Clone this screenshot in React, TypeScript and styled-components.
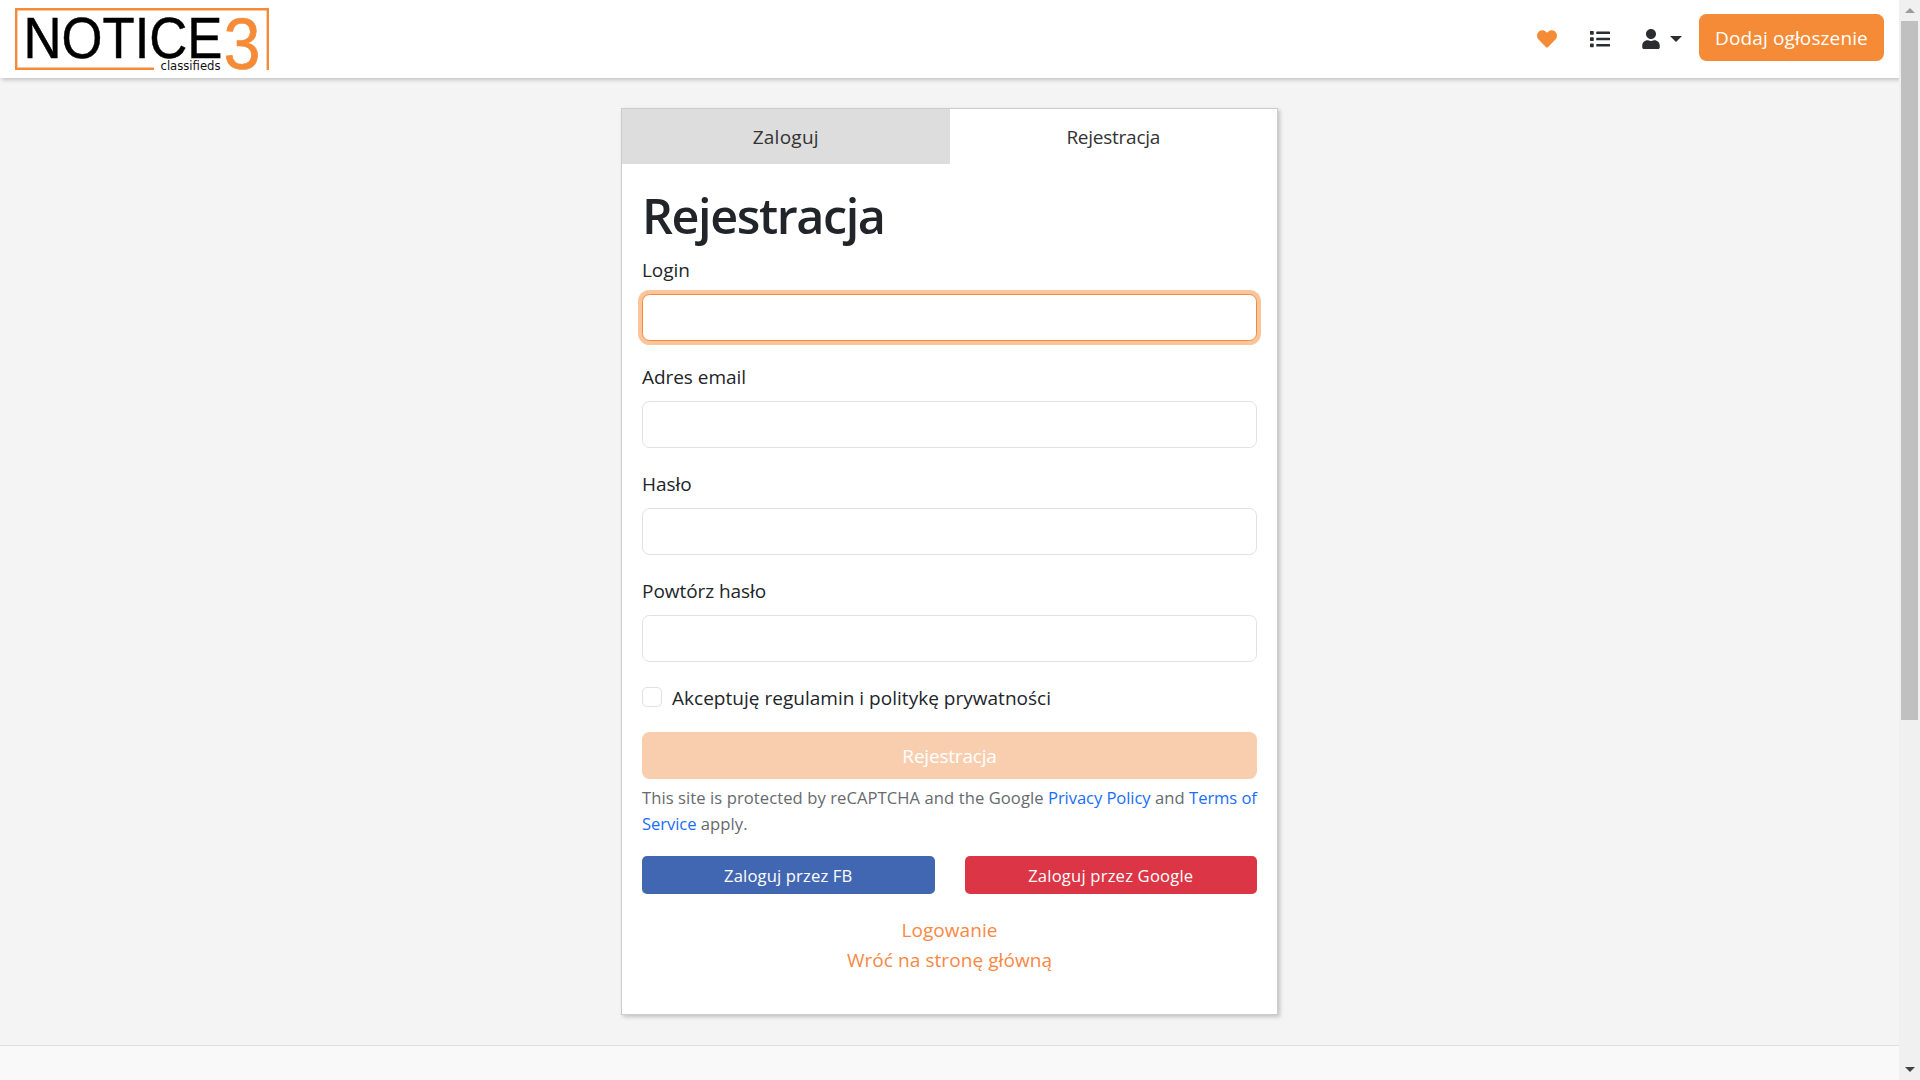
import React from "react";
import styled, { createGlobalStyle } from "styled-components";
import { FaHeart, FaList, FaUser } from "react-icons/fa";

const ORANGE = "#f68b37";

const Global = createGlobalStyle`
  *, *::before, *::after { box-sizing: border-box; }
  html, body { margin: 0; padding: 0; overflow: hidden; }
  body {
    font-family: "Open Sans", "Noto Sans", sans-serif;
    font-size: 19px;
    line-height: 30px;
    color: #212529;
    background: #f4f4f4;
  }
`;

const Shell = styled.div`
  display: grid;
  grid-template-columns: 1fr 21px;
  width: 100vw;
  height: 100vh;
  overflow: hidden;
`;

const Page = styled.div`
  display: flex;
  flex-direction: column;
  min-width: 0;
  overflow: hidden;
`;

const Header = styled.header`
  display: flex;
  align-items: flex-start;
  justify-content: space-between;
  flex: none;
  height: 78px;
  padding: 0 15px;
  background: #fff;
  box-shadow: 2px 2px 4px rgba(0, 0, 0, 0.2);
`;

const Logo = styled.svg`
  display: block;
  margin-top: 8px;
  overflow: visible;
  font-family: "Liberation Sans", Arial, sans-serif;
`;

const Nav = styled.nav`
  display: flex;
  align-items: center;
  margin-top: 14px;
  height: 47px;
`;

const NavItem = styled.a<{ $gap: number; $color?: string }>`
  display: flex;
  align-items: center;
  gap: 11px;
  margin-right: ${(p) => p.$gap}px;
  padding-top: 3px;
  color: ${(p) => p.$color ?? "#2b2d30"};
`;

const Caret = styled.span`
  border: 6px solid transparent;
  border-top-color: #2b2d30;
  border-bottom: 0;
  margin: -1px 0 0 -2px;
`;

const Button = styled.button<{ $bg: string; $small?: boolean; $spacing?: number }>`
  display: flex;
  align-items: center;
  justify-content: center;
  height: ${(p) => (p.$small ? 38 : 47)}px;
  padding: 0 16px;
  border: 0;
  border-radius: ${(p) => (p.$small ? 5 : 7.5)}px;
  background: ${(p) => p.$bg};
  color: #fff;
  font-family: inherit;
  font-size: ${(p) => (p.$small ? 16.6 : 19)}px;
  letter-spacing: ${(p) => p.$spacing ?? 0}px;
  line-height: 30px;
  white-space: nowrap;
`;

const AddButton = styled(Button)`
  width: 185px;
`;

const SocialButton = styled(Button)`
  padding-top: 1px;
`;

const Main = styled.main`
  display: flex;
  justify-content: center;
  align-items: flex-start;
  flex: none;
  height: 967px;
  padding-top: 30px;
`;

const Card = styled.section`
  width: 657px;
  height: 907px;
  border: 1px solid #ccc;
  background: #fff;
  box-shadow: 2px 2px 4px rgba(0, 0, 0, 0.2);
`;

const Tabs = styled.div`
  display: grid;
  grid-template-columns: 1fr 1fr;
`;

const Tab = styled.a<{ $active?: boolean }>`
  height: 55px;
  padding-top: 1px;
  line-height: 55px;
  text-align: center;
  letter-spacing: ${(p) => (p.$active ? -0.25 : 0.25)}px;
  color: #333;
  background: ${(p) => (p.$active ? "#fff" : "#ddd")};
`;

const Form = styled.form`
  display: flex;
  flex-direction: column;
  padding: 20px 20px 0;
`;

const Title = styled.h1`
  height: 60px;
  margin: 0 0 10px;
  padding-top: 1px;
  font-size: 48.5px;
  font-weight: 600;
  letter-spacing: -1.4px;
  line-height: 60px;
`;

const Field = styled.label`
  display: flex;
  flex-direction: column;
  gap: 10px;
  margin-bottom: 20px;
`;

const FieldName = styled.span`
  height: 30px;
  padding-top: 1px;
  letter-spacing: -0.05px;
`;

const Input = styled.input<{ $focused?: boolean }>`
  height: 47px;
  padding: 8px 15px;
  border: 1px solid ${(p) => (p.$focused ? ORANGE : "#dee2e6")};
  border-radius: 7.5px;
  outline: 0;
  background: #fff;
  font: inherit;
  box-shadow: ${(p) => (p.$focused ? "0 0 0 4px #fac59b" : "none")};
`;

const CheckRow = styled.label`
  display: flex;
  align-items: center;
  gap: 10px;
  height: 30px;
  margin-bottom: 20px;
`;

const CheckText = styled.span`
  padding-top: 2px;
  letter-spacing: 0.02px;
`;

const Checkbox = styled.input`
  appearance: none;
  width: 20px;
  height: 20px;
  margin: 0;
  border: 1px solid #dee2e6;
  border-radius: 5px;
`;

const Note = styled.p`
  margin: 6px 0 19px;
  font-size: 16.6px;
  letter-spacing: 0.07px;
  line-height: 26px;
  color: #666a6e;
`;

const NoteLink = styled.a`
  letter-spacing: -0.08px;
  color: #1a6dfd;
`;

const Social = styled.div`
  display: grid;
  grid-template-columns: 1fr 1fr;
  gap: 30px;
  margin-bottom: 21px;
`;

const Links = styled.div`
  display: flex;
  flex-direction: column;
  align-items: center;
`;

const TextLink = styled.a`
  letter-spacing: 0.07px;
  color: #f88843;
`;

const Footer = styled.footer`
  flex: 1;
  border-top: 1px solid #dcdfe1;
  background: #f9f9f9;
`;

const ScrollTrack = styled.div`
  display: flex;
  flex-direction: column;
  align-items: center;
  background: #f0f0f0;
`;

const ScrollArrow = styled.div<{ $down?: boolean }>`
  display: flex;
  align-items: center;
  justify-content: center;
  height: 21px;
  &::before {
    content: "";
    border: 5px solid transparent;
    ${(p) => (p.$down ? "border-top-color: #444; border-bottom: 0;" : "border-bottom-color: #9c9c9c; border-top: 0;")}
  }
`;

const ScrollThumb = styled.div`
  width: 17px;
  height: 699px;
  margin-bottom: auto;
  background: #c0c0c0;
`;

const fields = ["Login", "Adres email", "Hasło", "Powtórz hasło"];

export default function App() {
  return (
    <Shell>
      <Global />
      <Page>
        <Header>
          <Logo width="255" height="66" viewBox="0 0 255 66">
            <path d="M139 60.7H1.2V1.2H252.8V62" fill="none" stroke={ORANGE} strokeWidth="2.4" />
            <text x="8.5" y="50" fontSize="57" textLength="199" lengthAdjust="spacingAndGlyphs" fill="#000" stroke="#000" strokeWidth="0.5">NOTICE</text>
            <text x="145.5" y="62" fontSize="13" fontFamily="DejaVu Sans" textLength="60" lengthAdjust="spacingAndGlyphs" fill="#111">classifieds</text>
            <text x="208.5" y="60.5" fontSize="73" textLength="37" lengthAdjust="spacingAndGlyphs" fill={ORANGE} stroke={ORANGE} strokeWidth="0.6">3</text>
          </Logo>
          <Nav>
            <NavItem $gap={33} $color={ORANGE}><FaHeart size={20} /></NavItem>
            <NavItem $gap={31}><FaList size={20} /></NavItem>
            <NavItem $gap={17}><FaUser size={20} /><Caret /></NavItem>
            <AddButton $bg={ORANGE} $spacing={0.12}>Dodaj ogłoszenie</AddButton>
          </Nav>
        </Header>
        <Main>
          <Card>
            <Tabs>
              <Tab>Zaloguj</Tab>
              <Tab $active>Rejestracja</Tab>
            </Tabs>
            <Form>
              <Title>Rejestracja</Title>
              {fields.map((name, i) => (
                <Field key={name}>
                  <FieldName>{name}</FieldName>
                  <Input $focused={i === 0} />
                </Field>
              ))}
              <CheckRow>
                <Checkbox type="checkbox" />
                <CheckText>Akceptuję regulamin i politykę prywatności</CheckText>
              </CheckRow>
              <Button type="button" $bg="#f8ceaf" $spacing={-0.2}>Rejestracja</Button>
              <Note>
                This site is protected by reCAPTCHA and the Google <NoteLink>Privacy Policy</NoteLink> and{" "}
                <NoteLink>Terms of Service</NoteLink> apply.
              </Note>
              <Social>
                <SocialButton type="button" $small $bg="#4267b2" $spacing={0.15}>Zaloguj przez FB</SocialButton>
                <SocialButton type="button" $small $bg="#dc3545" $spacing={0.2}>Zaloguj przez Google</SocialButton>
              </Social>
              <Links>
                <TextLink>Logowanie</TextLink>
                <TextLink>Wróć na stronę główną</TextLink>
              </Links>
            </Form>
          </Card>
        </Main>
        <Footer />
      </Page>
      <ScrollTrack>
        <ScrollArrow />
        <ScrollThumb />
        <ScrollArrow $down />
      </ScrollTrack>
    </Shell>
  );
}
